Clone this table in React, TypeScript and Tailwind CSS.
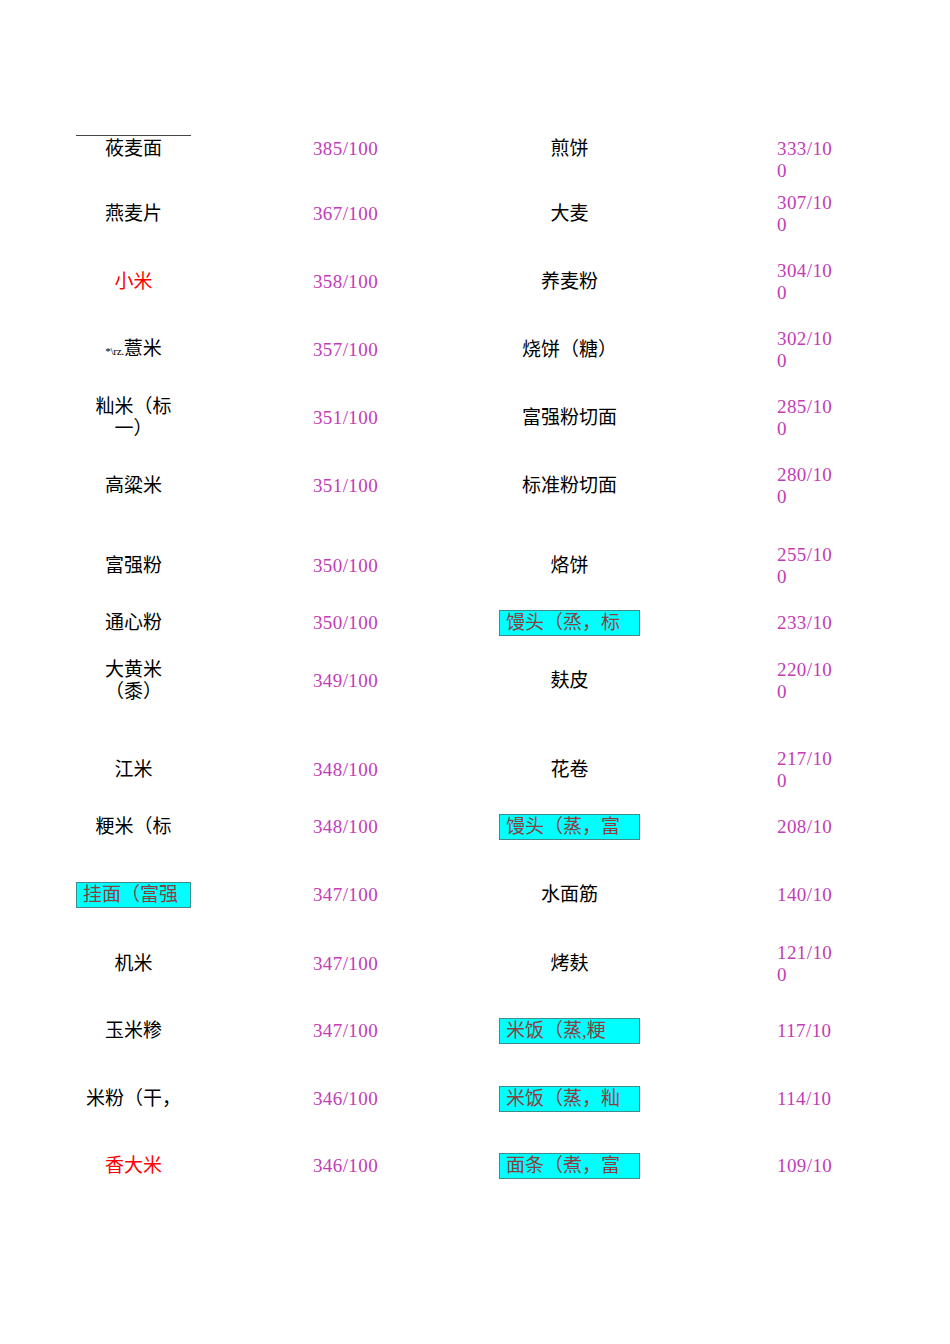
import React from "react";

type Cell = { lines: string[]; red?: boolean; box?: boolean; small?: string };

interface Row {
  gap: number;
  a: Cell;
  b: string;
  c: Cell;
  d: string[];
}

const t = (s: string, extra: Partial<Cell> = {}): Cell => ({ lines: s.split("|"), ...extra });

const rows: Row[] = [
  { gap: 0, a: t("莜麦面"), b: "385/100", c: t("煎饼"), d: ["333/10", "0"] },
  { gap: 21, a: t("燕麦片"), b: "367/100", c: t("大麦"), d: ["307/10", "0"] },
  { gap: 24, a: t("小米", { red: true }), b: "358/100", c: t("养麦粉"), d: ["304/10", "0"] },
  { gap: 24, a: t("薏米", { small: "*\\rz." }), b: "357/100", c: t("烧饼（糖）"), d: ["302/10", "0"] },
  { gap: 24, a: t("籼米（标|一）"), b: "351/100", c: t("富强粉切面"), d: ["285/10", "0"] },
  { gap: 24, a: t("高粱米"), b: "351/100", c: t("标准粉切面"), d: ["280/10", "0"] },
  { gap: 36, a: t("富强粉"), b: "350/100", c: t("烙饼"), d: ["255/10", "0"] },
  { gap: 13, a: t("通心粉"), b: "350/100", c: t("馒头（烝，标", { box: true }), d: ["233/10"] },
  { gap: 14, a: t("大黄米|（黍）"), b: "349/100", c: t("麸皮"), d: ["220/10", "0"] },
  { gap: 45, a: t("江米"), b: "348/100", c: t("花卷"), d: ["217/10", "0"] },
  { gap: 13, a: t("粳米（标"), b: "348/100", c: t("馒头（蒸，富", { box: true }), d: ["208/10"] },
  { gap: 24, a: t("挂面（富强", { box: true }), b: "347/100", c: t("水面筋"), d: ["140/10"] },
  { gap: 25, a: t("机米"), b: "347/100", c: t("烤麸"), d: ["121/10", "0"] },
  { gap: 23, a: t("玉米糁"), b: "347/100", c: t("米饭（蒸,粳", { box: true }), d: ["117/10"] },
  { gap: 24, a: t("米粉（干，"), b: "346/100", c: t("米饭（蒸，籼", { box: true }), d: ["114/10"] },
  { gap: 23, a: t("香大米", { red: true }), b: "346/100", c: t("面条（煮，富", { box: true }), d: ["109/10"] },
];

const NameCell = ({ cell, width, topLine }: { cell: Cell; width: string; topLine?: boolean }) => {
  if (cell.box) {
    return (
      <div className={`${width} shrink-0 h-[26px] bg-[#00ffff] border border-[#3f8a8a] pl-[6px] leading-[24px] text-[#8a3e3e] whitespace-nowrap overflow-hidden`}>
        {cell.lines[0]}
      </div>
    );
  }
  return (
    <div className={`${width} shrink-0 relative text-center ${cell.red ? "text-[#ff0000]" : "text-black"}`}>
      {topLine && <div className="absolute left-0 right-0 -top-[3px] h-px bg-[#444]" />}
      {cell.lines.map((l, i) => (
        <div key={i} className="leading-[22px] whitespace-nowrap">
          {cell.small && i === 0 && <span className="text-[11px] tracking-[-0.3px] align-baseline">{cell.small}</span>}
          {l}
        </div>
      ))}
    </div>
  );
};

export default function App() {
  return (
    <div
      className="w-[950px] h-[1344px] bg-white pt-[127px] text-[19px]"
      style={{ fontFamily: '"Liberation Serif", "Noto Sans CJK SC", serif' }}
    >
      {rows.map((r, i) => (
        <div
          key={i}
          className="flex items-center h-[44px] pl-[76px]"
          style={{ marginTop: r.gap }}
        >
          <NameCell cell={r.a} width="w-[115px]" topLine={i === 0} />
          <div className="ml-[99px] w-[111px] shrink-0 text-center leading-[22px] tracking-[0.4px] text-[#c23cb6]">{r.b}</div>
          <div className="ml-[98px] w-[141px] shrink-0 flex justify-center">
            <NameCell cell={r.c} width="w-[141px]" />
          </div>
          <div className={`ml-[137px] w-[70px] shrink-0 tracking-[0.4px] text-[#c23cb6] ${i === 0 ? "self-start mt-[11px]" : ""}`}>
            {r.d.map((l, j) => (
              <div key={j} className="leading-[22px] whitespace-nowrap">{l}</div>
            ))}
          </div>
        </div>
      ))}
    </div>
  );
}
